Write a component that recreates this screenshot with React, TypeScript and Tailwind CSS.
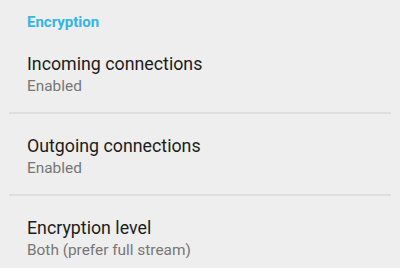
import React from "react";

const items = [
  { title: "Incoming connections", summary: "Enabled" },
  { title: "Outgoing connections", summary: "Enabled" },
  { title: "Encryption level", summary: "Both (prefer full stream)" },
];

export default function App() {
  return (
    <div
      className="w-[400px] h-[268px] overflow-hidden bg-[#eeeeee]"
      style={{ fontFamily: "Roboto, 'Noto Sans', sans-serif" }}
    >
      <div className="pt-3 pl-[27px] text-[15px] leading-[20px] font-bold text-[#33b5e5]">
        Encryption
      </div>
      {items.map((it, i) => (
        <div key={i}>
          <div className="pl-[27px] pt-[20px] pb-[16px]">
            <div className="text-[17.8px] leading-[24px] text-[#1c1c1c]">{it.title}</div>
            <div className="text-[15.4px] leading-[20px] text-[#767676]">{it.summary}</div>
          </div>
          {i < items.length - 1 && <div className="mx-[9px] h-[2px] bg-[#dedede]" />}
        </div>
      ))}
    </div>
  );
}
